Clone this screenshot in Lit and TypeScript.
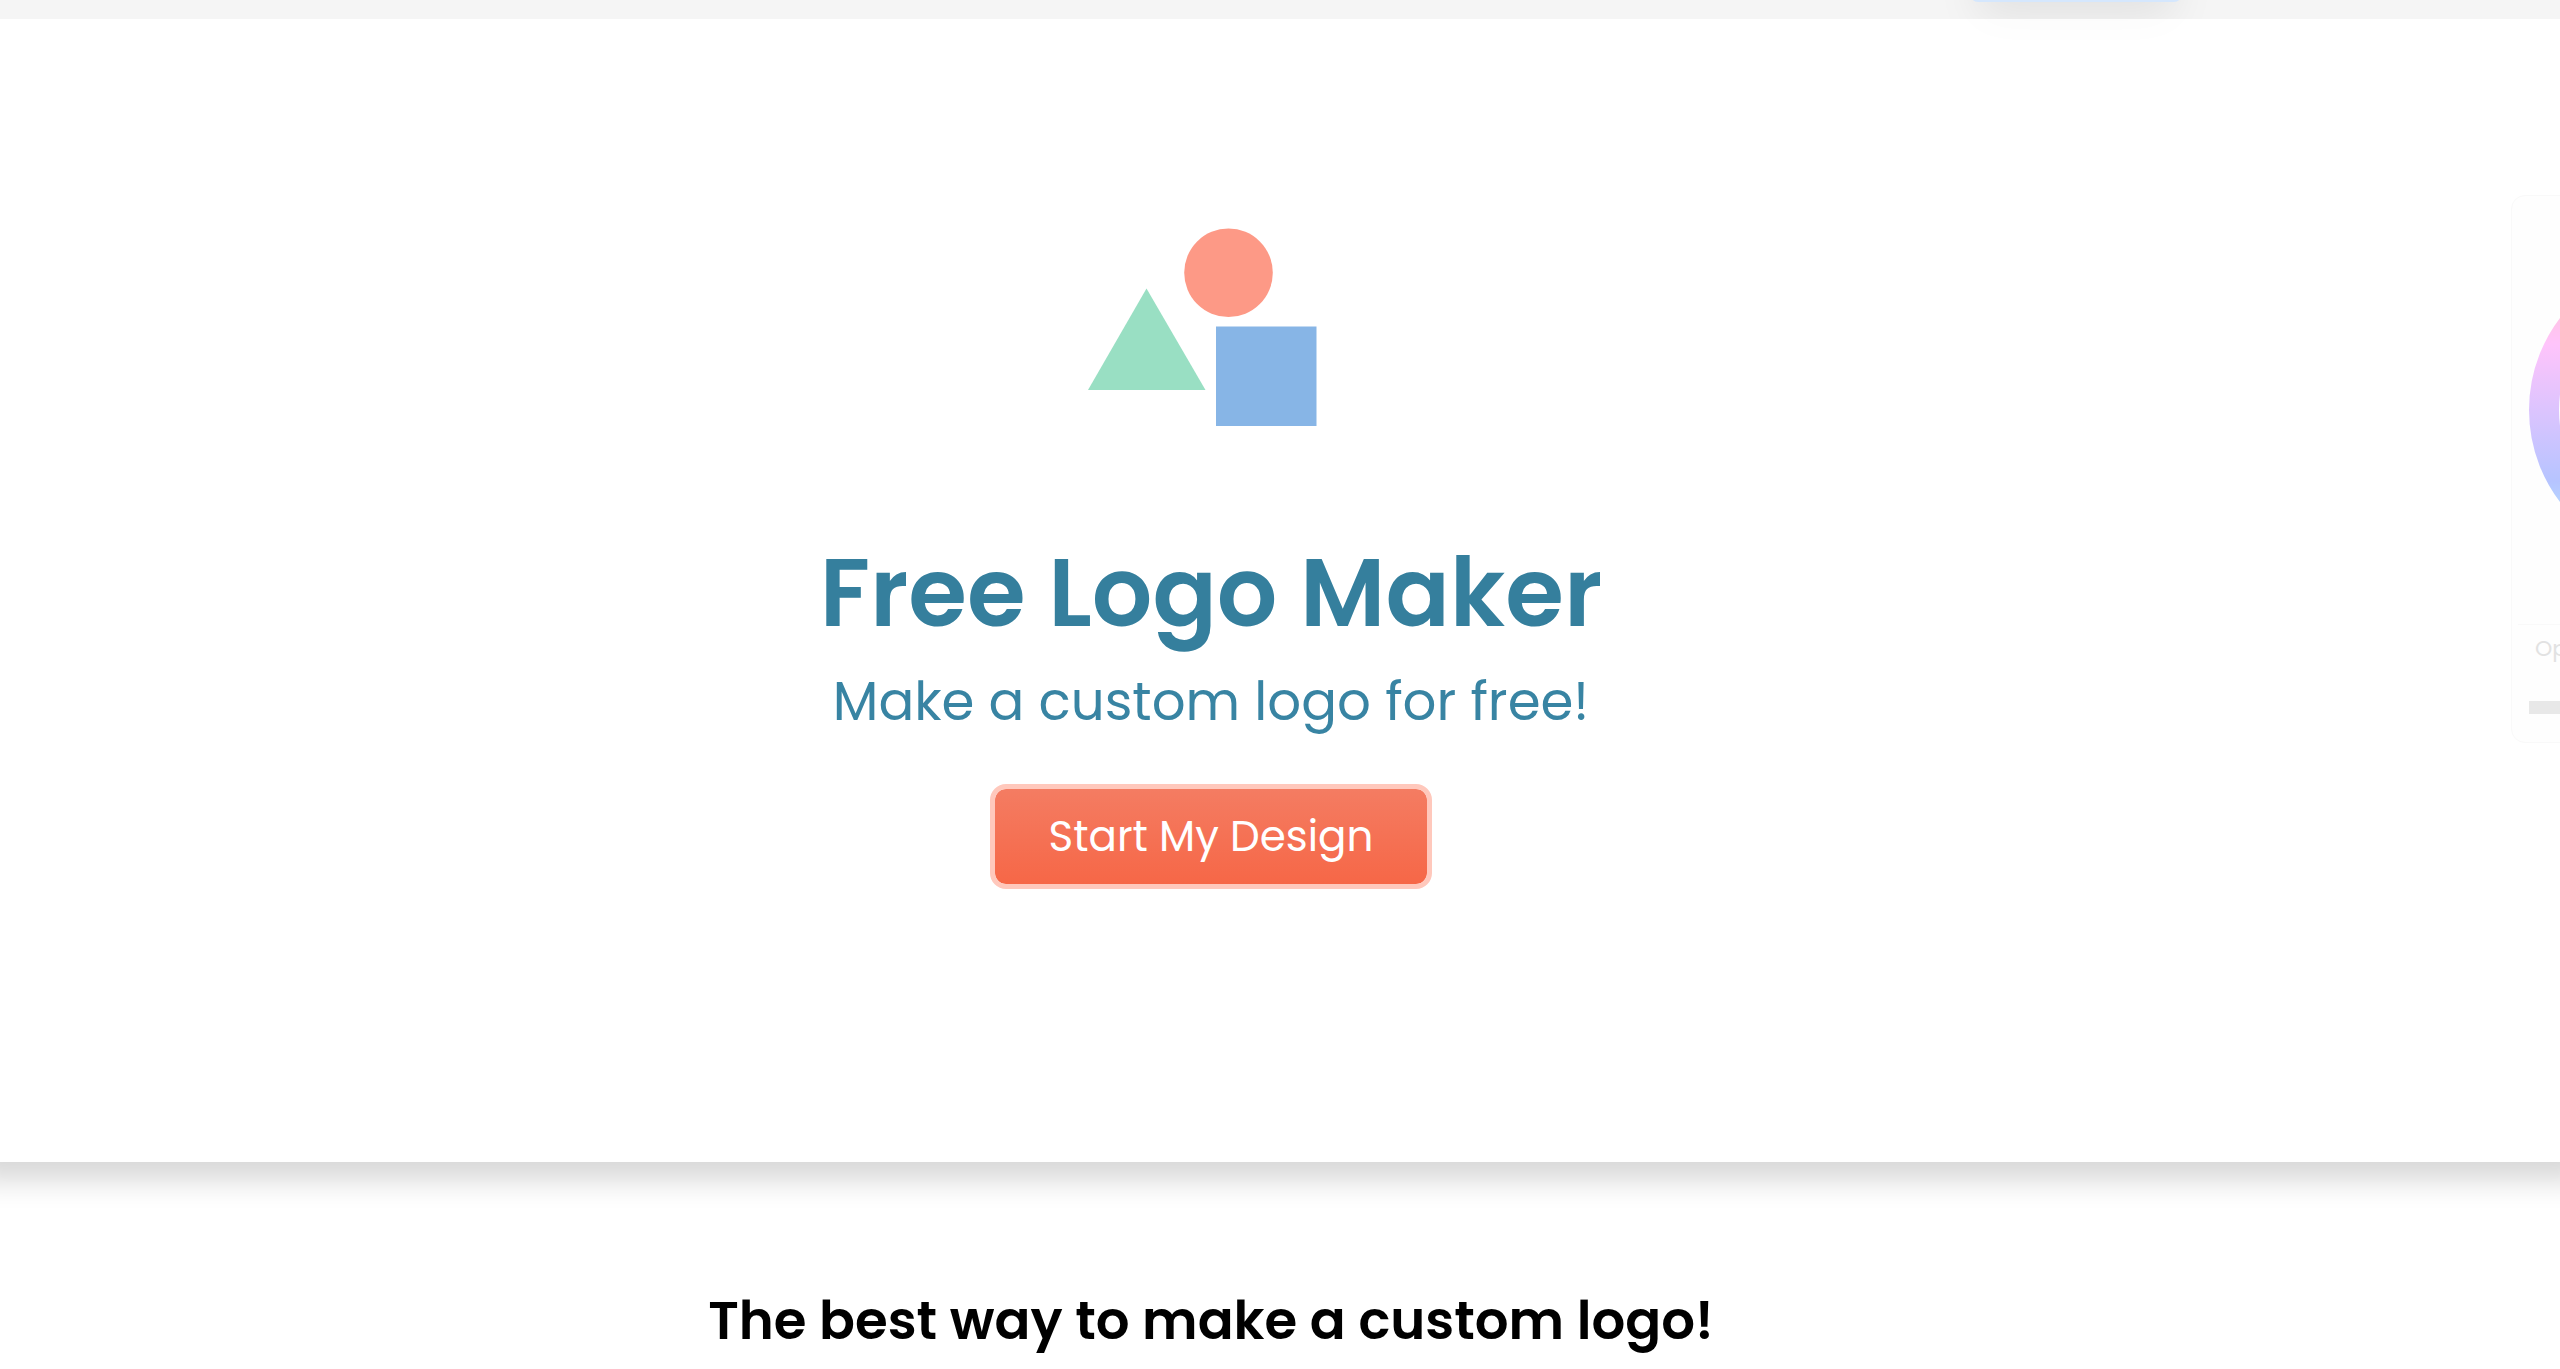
import { LitElement, html, css } from "lit";
import { customElement } from "lit/decorators.js";

@customElement("color-panel")
export class ColorPanel extends LitElement {
  static styles = css`
    :host {
      display: block;
      box-sizing: border-box;
      padding: 62px 17px 28px;
      border: 1px solid #f9f9f9;
      border-radius: 14px;
      background: #fefefe;
      color: #e2e2e2;
      font-size: 22px;
      line-height: 32px;
      text-align: left;
    }
    .wheel {
      display: block;
      width: 304px;
      height: 304px;
    }
    .divider {
      height: 1px;
      margin: 62px -11px 8px;
      border: 0;
      background: #f9f9f9;
    }
    .label {
      display: block;
      padding-left: 6px;
    }
    .track {
      appearance: none;
      display: block;
      width: 100%;
      height: 13px;
      margin: 36px 0 0;
      background: #e8e8e8;
    }
    .track::-webkit-slider-thumb {
      appearance: none;
      width: 13px;
      height: 13px;
      background: #d8d8d8;
    }
  `;

  render() {
    return html`
      <svg class="wheel" viewBox="0 0 304 304" aria-hidden="true">
        <defs>
          <linearGradient id="hue" x1="0" y1="0" x2="0" y2="1">
            <stop offset="0" stop-color="#ffc4c4" />
            <stop offset="0.26" stop-color="#ffc4fb" />
            <stop offset="0.5" stop-color="#dcc4fe" />
            <stop offset="0.76" stop-color="#b6c4ff" />
            <stop offset="1" stop-color="#b8f0ff" />
          </linearGradient>
        </defs>
        <circle cx="152" cy="152" r="137" fill="none" stroke="url(#hue)" stroke-width="30" />
      </svg>
      <hr class="divider" />
      <label class="label" for="opacity">Opacity</label>
      <input class="track" id="opacity" type="range" value="100" />
    `;
  }
}

@customElement("app-root")
export class AppRoot extends LitElement {
  static styles = css`
    :host {
      display: block;
      font-family: Poppins, Inter, "Open Sans", sans-serif;
      color: #000;
    }
    .page {
      position: relative;
      min-height: 100vh;
      overflow: hidden;
      background: #fff;
    }
    .topbar {
      height: 19px;
      background: #f5f5f5;
    }
    .tab {
      position: absolute;
      top: -78px;
      right: 378px;
      width: 212px;
      height: 80px;
      border: 0;
      border-radius: 8px;
      background: #d5e7fd;
      box-shadow: 0 24px 44px -8px rgba(0, 0, 0, 0.08);
    }
    .hero {
      position: relative;
      display: flex;
      flex-direction: column;
      align-items: center;
      padding: 209px 138px 273px 0;
      background: rgba(255, 255, 255, 0.7);
      box-shadow: 0 -8px 28px 26px rgba(0, 0, 0, 0.16);
      clip-path: inset(0 0 -60px 0);
      color: #357f9d;
      text-align: center;
    }
    .shapes {
      display: block;
      width: 260px;
      height: 200px;
    }
    .title {
      margin: 96px 0 0;
      font-size: 95px;
      font-weight: 600;
      line-height: 138px;
    }
    .subtitle {
      margin: 0;
      font-size: 53px;
      font-weight: 400;
      line-height: 80px;
      color: #3884a3;
    }
    .start {
      margin: 42px 0 0;
      padding: 16px 54px;
      border: 5px solid #ffc8bc;
      border-radius: 16px;
      background: linear-gradient(#f47c62, #f66747) padding-box;
      color: #fff;
      font: inherit;
      font-size: 42px;
      line-height: 63px;
      cursor: pointer;
    }
    .panel {
      position: absolute;
      top: 176px;
      right: -291px;
      width: 340px;
    }
    .intro {
      padding: 119px 138px 0 0;
      text-align: center;
    }
    .heading {
      margin: 0;
      font-size: 53px;
      font-weight: 600;
      line-height: 80px;
    }
  `;

  render() {
    return html`
      <div class="page">
        <header class="topbar">
          <button class="tab" type="button" aria-label="Menu"></button>
        </header>
        <main>
          <section class="hero">
            <svg class="shapes" viewBox="0 0 260 200" aria-hidden="true">
              <circle cx="147.500" cy="44.800" r="44.300" fill="#fd9986" />
              <path d="M65.500 60.500L124.500 162H7Z" fill="#99dfc3" />
              <rect x="135" y="98.500" width="100.500" height="99.500" fill="#87b5e6" />
            </svg>
            <h1 class="title">Free Logo Maker</h1>
            <p class="subtitle">Make a custom logo for free!</p>
            <button class="start" type="button">Start My Design</button>
            <color-panel class="panel"></color-panel>
          </section>
          <section class="intro">
            <h2 class="heading">The best way to make a custom logo!</h2>
          </section>
        </main>
      </div>
    `;
  }
}
